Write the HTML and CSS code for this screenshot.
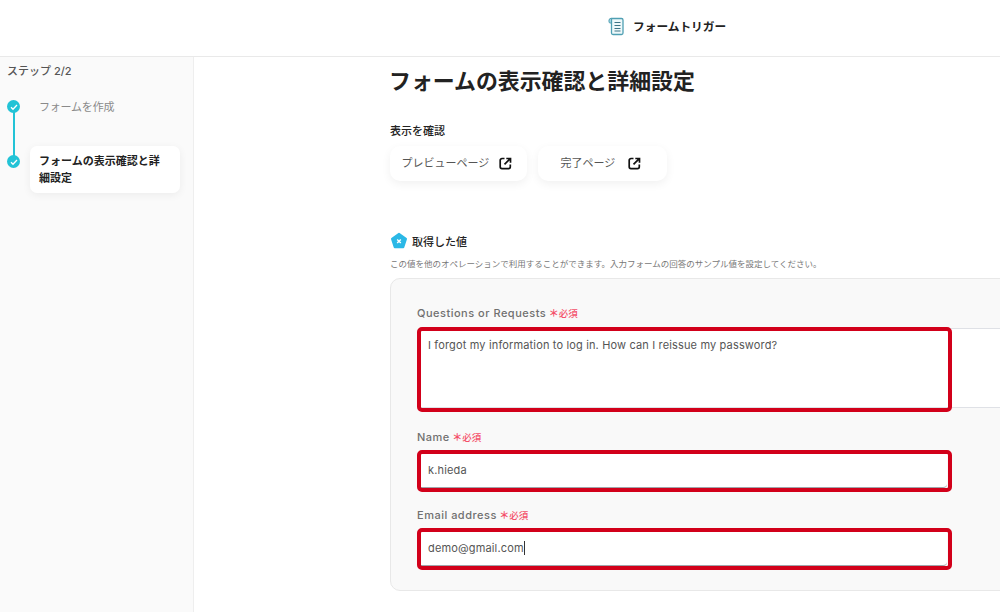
FILE: index.html
```html
<!DOCTYPE html>
<html lang="ja">
<head>
<meta charset="utf-8">
<title>フォームトリガー</title>
<link rel="stylesheet" href="styles.css">
</head>
<body>
<div class="page">
  <header class="topbar">
    <svg class="topbar-icon" width="17" height="19" viewBox="0 0 17 19" fill="none">
      <path d="M3.500 1.500H13.500a1.500 1.500 0 0 1 1.500 1.500V16a1.500 1.500 0 0 1-1.500 1.500H5a1.500 1.500 0 0 1-1.500-1.500z" fill="#eef8fa" stroke="#4f9fb3" stroke-width="1.300"/>
      <path d="M6.500 5.500h6M6.500 8.500h6M6.500 11.500h6M6.500 14h6" stroke="#3d7486" stroke-width="1.200"/>
      <path d="M1 3a2 2 0 0 1 2.500-1.500V6H2.200A1.200 1.200 0 0 1 1 4.800z" fill="#9ed2df" stroke="#4f9fb3" stroke-width="1"/>
    </svg>
    <span class="topbar-title">フォームトリガー</span>
  </header>
  <div class="body">
    <aside class="sidebar">
      <div class="step-count">ステップ 2/2</div>
      <ol class="steps">
        <li class="step step-done">
          <span class="step-dot"><svg width="8" height="8" viewBox="0 0 8 8" fill="none"><path d="M1 4.200l2 2 4-4.200" stroke="#fff" stroke-width="1.300"/></svg></span>
          <span class="step-text">フォームを作成</span>
        </li>
        <li class="step step-current">
          <span class="step-dot"><svg width="8" height="8" viewBox="0 0 8 8" fill="none"><path d="M1 4.200l2 2 4-4.200" stroke="#fff" stroke-width="1.300"/></svg></span>
          <span class="step-text">フォームの表示確認と詳細設定</span>
        </li>
      </ol>
    </aside>
    <main class="main">
      <h1 class="title">フォームの表示確認と詳細設定</h1>
      <div class="section-label">表示を確認</div>
      <div class="buttons">
        <a class="btn btn-preview">プレビューページ
          <svg width="13" height="13" viewBox="0 0 13 13" fill="none"><path d="M5.500 1.500H3A1.800 1.800 0 0 0 1.200 3.300v6.500A1.800 1.800 0 0 0 3 11.600h6.500a1.800 1.800 0 0 0 1.800-1.800V7.500" stroke="#111" stroke-width="1.700"/><path d="M5.500 7.300l5-5M7.300 1.500h4.200v4.200" stroke="#111" stroke-width="1.700"/></svg>
        </a>
        <a class="btn btn-done">完了ページ
          <svg width="13" height="13" viewBox="0 0 13 13" fill="none"><path d="M5.500 1.500H3A1.800 1.800 0 0 0 1.200 3.300v6.500A1.800 1.800 0 0 0 3 11.600h6.500a1.800 1.800 0 0 0 1.800-1.800V7.500" stroke="#111" stroke-width="1.700"/><path d="M5.500 7.300l5-5M7.300 1.500h4.200v4.200" stroke="#111" stroke-width="1.700"/></svg>
        </a>
      </div>
      <div class="values-head">
        <svg width="18" height="18" viewBox="0 0 18 18"><path d="M9 1.800l7 5.100-2.700 8.300H4.700L2 6.900z" fill="#2bb8e6" stroke="#2bb8e6" stroke-width="2" stroke-linejoin="round"/><path d="M7.200 7.500l3.600 3.600M10.800 7.500l-3.600 3.600" stroke="#fff" stroke-width="1.400"/></svg>
        <span>取得した値</span>
      </div>
      <p class="values-note">この値を他のオペレーションで利用することができます。入力フォームの回答のサンプル値を設定してください。</p>
      <section class="panel">
        <div class="field field-area">
          <label class="label">Questions or Requests <span class="req"><i>＊</i>必須</span></label>
          <div class="input area">I forgot my information to log in. How can I reissue my password?</div>
          <span class="mark mark-area"></span>
        </div>
        <div class="field field-name">
          <label class="label">Name <span class="req"><i>＊</i>必須</span></label>
          <div class="input">k.hieda</div>
          <span class="mark"></span>
        </div>
        <div class="field field-email">
          <label class="label">Email address <span class="req"><i>＊</i>必須</span></label>
          <div class="input">demo@gmail.com<span class="caret"></span></div>
          <span class="mark"></span>
        </div>
      </section>
    </main>
  </div>
</div>
</body>
</html>
```
FILE: styles.css
```css
* { box-sizing: border-box; }
html, body { margin: 0; height: 100%; }
body {
  background: #fff;
  color: #222;
  font-family: Inter, "Noto Sans CJK JP", sans-serif;
  overflow: hidden;
}
.page { width: 1000px; height: 612px; overflow: hidden; display: flex; flex-direction: column; }
.topbar {
  height: 57px;
  flex: none;
  border-bottom: 1px solid #e9e9e9;
  display: flex;
  align-items: center;
  padding-left: 608px;
  gap: 8px;
}
.topbar-icon { margin-top: -4px; }
.topbar-title { font-size: 11.700px; font-weight: 700; color: #222; margin-top: -5px; }
.body { flex: 1; display: flex; min-height: 0; }
.sidebar {
  width: 194px;
  flex: none;
  background: #fafafa;
  border-right: 1px solid #eeeeee;
  padding: 6px 13px 0 7px;
}
.step-count { font-size: 11px; font-weight: 500; color: #555; line-height: 16px; }
.steps { list-style: none; margin: 20px 0 0; padding: 0; }
.step { position: relative; display: flex; }
.step-dot {
  position: absolute;
  left: 0;
  width: 13px;
  height: 13px;
  border-radius: 50%;
  background: #22c3d6;
  display: flex;
  align-items: center;
  justify-content: center;
}
.step-done { height: 47px; padding-left: 32px; }
.step-done .step-dot { top: 1px; }
.step-done::after {
  content: "";
  position: absolute;
  left: 5.500px;
  top: 12px;
  width: 2px;
  height: 48px;
  background: #22c3d6;
}
.step-done .step-text { font-size: 11px; line-height: 17px; letter-spacing: -.2px; color: #8a8a8a; }
.step-current { padding-left: 23px; }
.step-current .step-dot { top: 9px; }
.step-current .step-text {
  width: 150px;
  padding: 6.500px 19px 6.500px 9px;
  background: #fff;
  border-radius: 7px;
  font-size: 11px;
  font-weight: 700;
  line-height: 17px;
  color: #222;
  box-shadow: 0 2px 8px rgba(0,0,0,.06);
}
.main { flex: 1; padding: 9px 0 0 196px; min-width: 0; }
.title { margin: 0 0 0 -1px; font-size: 21.900px; font-weight: 700; line-height: 30px; color: #222; }
.section-label { margin-top: 27px; font-size: 11px; font-weight: 500; line-height: 16px; color: #222; }
.buttons { display: flex; gap: 11px; margin-top: 7px; }
.btn {
  height: 35px;
  display: flex;
  align-items: center;
  justify-content: space-between;
  background: #fff;
  border-radius: 10px;
  font-size: 11px;
  line-height: 14px;
  color: #555;
  box-shadow: 0 3px 10px rgba(0,0,0,.06);
  padding-bottom: 1px;
}
.btn-preview { width: 137px; padding-left: 11.500px; padding-right: 15px; }
.btn-done { width: 129px; padding-left: 22.500px; padding-right: 26px; }
.values-head {
  display: flex;
  align-items: center;
  gap: 4px;
  margin-top: 51px;
  height: 18px;
  font-size: 11px;
  font-weight: 500;
  color: #222;
}
.values-note { margin: 8px 0 0; font-size: 8.500px; line-height: 12px; color: #777; white-space: nowrap; }
.panel {
  width: 680px;
  height: 313px;
  margin-top: 8px;
  border: 1px solid #e8e8e8;
  border-radius: 10px;
  background: #f9f9f9;
  padding: 26px 0 0 26px;
}
.field { position: relative; width: 530px; }
.field-area { width: 640px; }
.field-name { margin-top: 21px; }
.field-email { margin-top: 19px; }
.label {
  display: block;
  font-size: 11px;
  font-weight: 500;
  line-height: 16px;
  letter-spacing: .5px;
  color: #707070;
}
.req { color: #f4506a; font-size: 9.500px; letter-spacing: 0; margin-left: -1px; }
.req i { font-style: normal; font-size: 10px; font-weight: 700; }
.input {
  margin-top: 6px;
  height: 36px;
  padding: 0 11px;
  display: flex;
  align-items: center;
  background: #fff;
  border-bottom: 1px solid #a0a4aa;
  border-radius: 4px;
  font-size: 11px;
  letter-spacing: .15px;
  color: #555;
}
.area {
  height: 80px;
  align-items: flex-start;
  padding-top: 9px;
  border-top: 1px solid #dfe1e6;
  border-bottom: 1px solid #dfe1e6;
}
.caret { width: 1px; height: 14px; background: #333; }
.mark {
  position: absolute;
  left: 0;
  right: -5px;
  top: 21px;
  bottom: -4px;
  border: 4px solid #d2001a;
  border-radius: 5px;
  pointer-events: none;
}
.mark-area { right: auto; width: 535px; top: 22px; bottom: -4px; }
```
